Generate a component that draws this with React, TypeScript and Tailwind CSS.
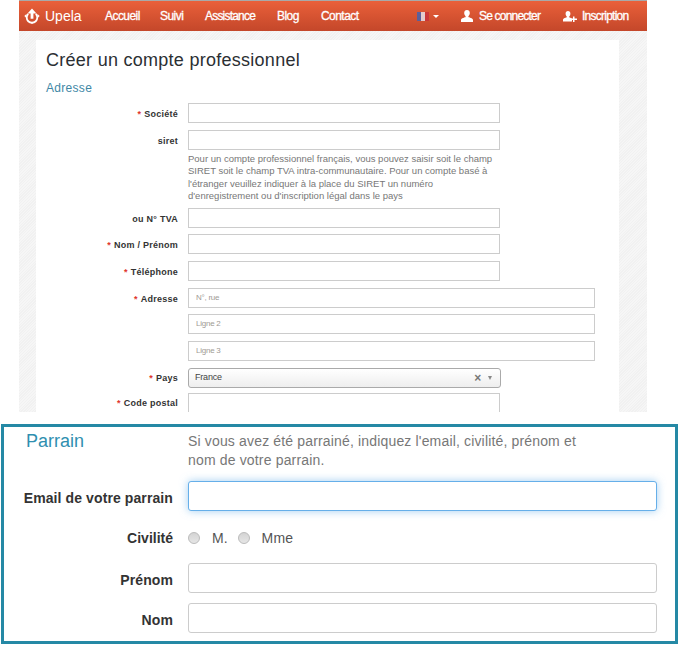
import React from "react";

function Req() {
  return <span className="text-[#e0352b] mr-[3px]">*</span>;
}

function Row({
  label,
  required,
  wide,
  placeholder,
  className,
}: {
  label?: string;
  required?: boolean;
  wide?: boolean;
  placeholder?: string;
  className?: string;
}) {
  return (
    <div className={"flex items-center " + (className || "")}>
      <label className="w-[142px] pt-[3px] text-right text-[9px] font-bold tracking-[0.25px] text-[#333]">
        {required && <Req />}
        {label}
      </label>
      <input
        readOnly
        placeholder={placeholder}
        className={
          "ml-[10px] h-[20px] border border-[#ccc] bg-white pl-[7px] pb-[2px] text-[8px] tracking-[-0.25px] placeholder:text-[#a09a94] " +
          (wide ? "w-[407px]" : "w-[312px]")
        }
      />
    </div>
  );
}

function LogoIcon() {
  return (
    <svg width="16" height="16" viewBox="0 0 16 16" fill="none">
      <path d="M4.200 5.800A5.300 5.300 0 1 0 11.800 5.800" stroke="#fff" strokeWidth="1.800" />
      <path d="M8 0.500 12.500 5.400H9.400V10.800H6.600V5.400H3.500z" fill="#fff" />
      <path d="M0.300 8 2.500 6V10z M15.700 8 13.500 6V10z M8 16 6 13.800H10z" fill="#fff" />
    </svg>
  );
}

function UserIcon() {
  return (
    <svg width="12" height="12" viewBox="0 0 12 12" fill="#fff" className="shrink-0">
      <path d="M6 0c1.800 0 2.800 1.300 2.800 3.100 0 1.300-.6 2.500-1.400 3.100v.9c.4.400 4.600 1.100 4.600 3V12H0v-1.900c0-1.900 4.200-2.600 4.600-3v-.9C3.800 5.600 3.200 4.400 3.200 3.100 3.200 1.300 4.200 0 6 0z" />
    </svg>
  );
}

function UserPlusIcon() {
  return (
    <svg width="14" height="12" viewBox="0 0 14 12" fill="#fff" className="shrink-0">
      <path d="M5 1c1.500 0 2.400 1.100 2.400 2.700 0 1.100-.5 2.100-1.200 2.700v.8c.3.300 1.900.7 2.800 1.300V11.600H0V9.700c0-1.600 3.500-2.200 3.800-2.500v-.8C3.100 5.800 2.600 4.800 2.600 3.700 2.600 2.100 3.500 1 5 1z" />
      <path d="M10 6.500h1.500V8.500H14V10H11.500V12H10V10H8V8.500h2z" />
    </svg>
  );
}

function Navbar() {
  return (
    <div className="h-[31px] border-t border-[#a9a9a9] bg-gradient-to-b from-[#ea603a] to-[#c4472a] shadow-[0_1px_2px_rgba(0,0,0,0.35)] flex items-center whitespace-nowrap text-white text-[12px] tracking-[-0.55px] [-webkit-text-stroke:0.3px_white]">
      <div className="ml-[5px] w-[16px] flex shrink-0">
        <LogoIcon />
      </div>
      <span className="ml-[5px] pt-[1px] w-[36px] text-[14px] tracking-[0px] [-webkit-text-stroke:0]">Upela</span>
      <span className="ml-[24px] w-[34px]">Accueil</span>
      <span className="ml-[21px] w-[23px]">Suivi</span>
      <span className="ml-[22px] w-[50px] tracking-[-0.8px]">Assistance</span>
      <span className="ml-[22px] w-[24px]">Blog</span>
      <span className="ml-[20px] w-[42px]">Contact</span>
      <div className="ml-[54px] flex h-[9px] w-[12px] shrink-0 opacity-80">
        <div className="flex-1 bg-[#3f63b5]" />
        <div className="flex-1 bg-[#e8eaf4]" />
        <div className="flex-1 bg-[#c9303a]" />
      </div>
      <div className="ml-[4px] h-0 w-0 shrink-0 border-x-[3px] border-t-[3px] border-x-transparent border-t-white" />
      <div className="ml-[22px] flex shrink-0">
        <UserIcon />
      </div>
      <span className="ml-[6px] w-[62px] tracking-[-0.8px]">Se connecter</span>
      <div className="ml-[22px] flex shrink-0">
        <UserPlusIcon />
      </div>
      <span className="ml-[5px] w-[47px] tracking-[-0.75px]">Inscription</span>
    </div>
  );
}

function TopForm() {
  return (
    <div className="ml-[19px] w-[628px] h-[412px] overflow-hidden">
      <Navbar />
      <div className="h-[381px] px-[17px] pt-[9px] bg-[repeating-linear-gradient(135deg,#f1f1f1_0px,#f1f1f1_1px,#f6f6f6_1px,#f6f6f6_2px)]">
        <div className="w-[583px] h-[372px] bg-white pl-[10px] overflow-hidden">
          <h1 className="pt-[9px] text-[18px] leading-[22px] text-[#2b2f33] tracking-[0.27px]">
            Créer un compte professionnel
          </h1>
          <h2 className="mt-[9px] text-[12px] leading-[16px] text-[#3f88a6] tracking-[0.3px]">Adresse</h2>
          <div className="-ml-[10px] mt-[7px]">
            <Row label="Société" required />
            <Row label="siret" className="mt-[7px]" />
            <p className="ml-[152px] mt-[3px] whitespace-nowrap text-[9.500px] leading-[12.300px] text-[#777]">
              Pour un compte professionnel français, vous pouvez saisir soit le champ
              <br />
              SIRET soit le champ TVA intra-communautaire. Pour un compte basé à
              <br />
              l'étranger veuillez indiquer à la place du SIRET un numéro
              <br />
              d'enregistrement ou d'inscription légal dans le pays
            </p>
            <Row label="ou N° TVA" className="mt-[6px]" />
            <Row label="Nom / Prénom" required className="mt-[6px]" />
            <Row label="Téléphone" required className="mt-[7px]" />
            <Row label="Adresse" required wide placeholder="N°, rue" className="mt-[7px]" />
            <Row wide placeholder="Ligne 2" className="mt-[6px]" />
            <Row wide placeholder="Ligne 3" className="mt-[7px]" />
            <div className="flex items-center mt-[7px]">
              <label className="w-[142px] pt-[2px] text-right text-[9px] font-bold tracking-[0.25px] text-[#333]">
                <Req />
                Pays
              </label>
              <div className="ml-[10px] w-[313px] h-[20px] rounded-[3px] border border-[#aaa] bg-gradient-to-b from-white to-[#eee] flex items-center pl-[6px] pr-[8px] text-[9px] tracking-[-0.2px] text-[#444]">
                <span className="flex-1">France</span>
                <span className="text-[12px] font-bold text-[#777] leading-none">×</span>
                <span className="ml-[7px] h-0 w-0 border-x-[2.500px] border-t-[4px] border-x-transparent border-t-[#888]" />
              </div>
            </div>
            <div className="flex items-start mt-[5px]">
              <label className="w-[142px] pt-[4px] text-right text-[9px] font-bold tracking-[0.25px] text-[#333]">
                <Req />
                Code postal
              </label>
              <input readOnly className="ml-[10px] w-[312px] h-[30px] border border-[#ccc]" />
            </div>
          </div>
        </div>
      </div>
    </div>
  );
}

function ParrainRow({ label, focus, className }: { label: string; focus?: boolean; className?: string }) {
  return (
    <div className={"flex items-center " + (className || "")}>
      <label className="w-[169px] pt-[5px] text-right text-[14px] font-bold text-[#333] tracking-[0.1px]">{label}</label>
      <input
        readOnly
        className={
          "ml-[15px] w-[469px] h-[30px] rounded-[3px] bg-white border " +
          (focus ? "border-[#66afe9] shadow-[0_0_8px_rgba(102,175,233,0.6)]" : "border-[#ccc]")
        }
      />
    </div>
  );
}

function Radio() {
  return (
    <span className="inline-block h-[12px] w-[12px] rounded-full border border-[#bbb] bg-gradient-to-b from-[#d4d4d4] to-[#e6e6e6]" />
  );
}

function ParrainBox() {
  return (
    <div className="ml-[1px] mt-[12px] w-[677px] h-[220px] border-[3px] border-[#2589a5] bg-white">
      <div className="flex pt-[3px] h-[54px]">
        <h3 className="ml-[22px] w-[162px] text-[18px] leading-[22px] text-[#2f8fb0]">Parrain</h3>
        <p className="w-[400px] text-[14px] leading-[19px] text-[#777] tracking-[0.16px] pt-[2px]">
          Si vous avez été parrainé, indiquez l'email, civilité, prénom et nom de votre parrain.
        </p>
      </div>
      <ParrainRow label="Email de votre parrain" focus />
      <div className="flex items-center mt-[17px] h-[20px] text-[14px]">
        <label className="w-[169px] text-right font-bold text-[#333]">Civilité</label>
        <div className="ml-[15px] flex items-center text-[#555]">
          <Radio />
          <span className="ml-[12px]">M.</span>
          <span className="ml-[10px] flex">
            <Radio />
          </span>
          <span className="ml-[12px] tracking-[0.2px]">Mme</span>
        </div>
      </div>
      <ParrainRow label="Prénom" className="mt-[15px]" />
      <ParrainRow label="Nom" className="mt-[10px]" />
    </div>
  );
}

export default function App() {
  return (
    <div className="w-[685px] h-[651px] bg-white overflow-hidden font-['Liberation_Sans',Arial,sans-serif]">
      <TopForm />
      <ParrainBox />
    </div>
  );
}
